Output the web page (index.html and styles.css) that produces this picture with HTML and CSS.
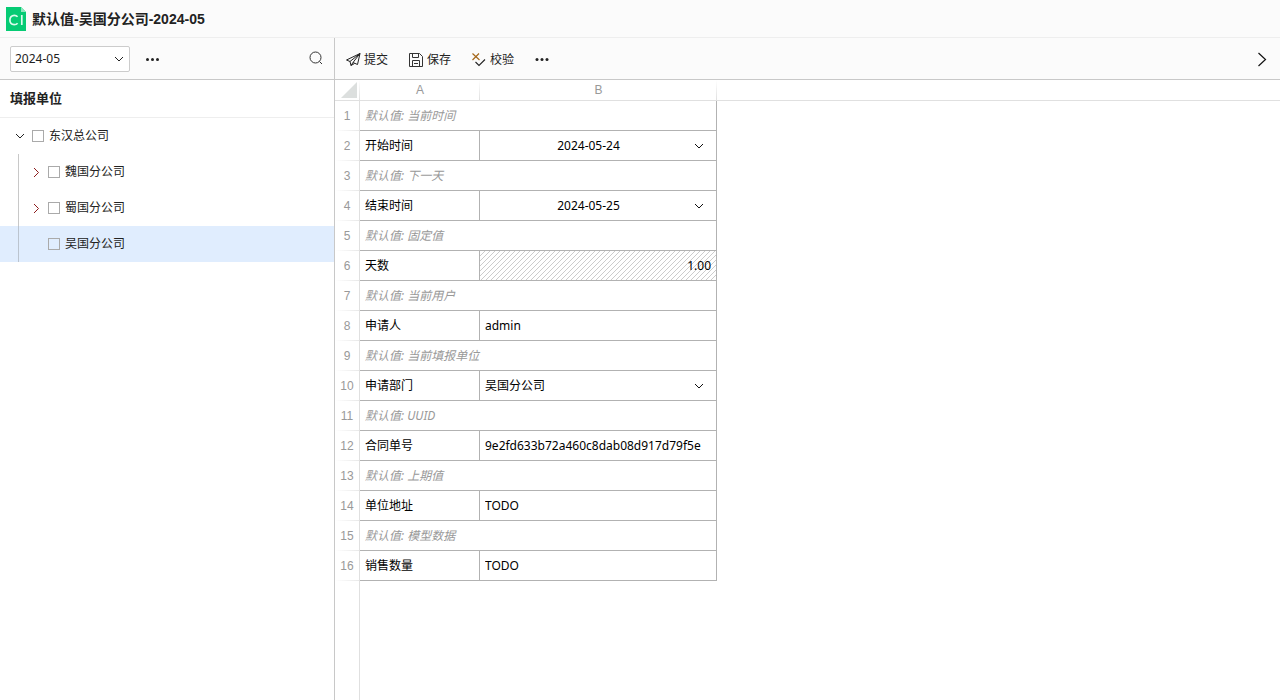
FILE: index.html
```html
<!DOCTYPE html>
<html lang="zh-CN">
<head>
<meta charset="utf-8">
<title>默认值-吴国分公司-2024-05</title>
<link rel="stylesheet" href="styles.css">
</head>
<body>
<header class="titlebar">
  <svg class="logo" viewBox="0 0 20 24" width="20" height="24" aria-hidden="true">
    <path d="M0 0H15L20 5V24H0Z" fill="#06cb74"/>
    <path d="M15 0L20 5H15Z" fill="#8fe8bf"/>
    <path d="M11.600 9.800C10.700 8.800 9.600 8.400 8.300 8.400C5.600 8.400 3.900 10.300 3.900 13.100C3.900 15.900 5.600 17.700 8.200 17.700C9.600 17.700 10.800 17.200 11.600 16.200M15.800 8V18" fill="none" stroke="#dcfbec" stroke-width="1.700"/>
  </svg>
  <h1 class="title">默认值-吴国分公司-2024-05</h1>
</header>
<main class="workspace">
  <aside class="sidebar">
    <div class="toolbar side-tools">
      <select class="period" aria-label="期间"><option>2024-05</option></select>
      <button class="icon-btn" aria-label="更多"><svg width="16" height="16" viewBox="0 0 16 16"><g fill="#222"><circle cx="2.500" cy="8.500" r="1.500"/><circle cx="7.500" cy="8.500" r="1.500"/><circle cx="12.500" cy="8.500" r="1.500"/></g></svg></button>
      <button class="icon-btn search" aria-label="搜索"><svg width="16" height="16" viewBox="0 0 16 16" fill="none" stroke="#333"><circle cx="7.500" cy="6.500" r="5.500"/><path d="M11.500 10.500L14 13"/></svg></button>
    </div>
    <h2 class="side-title">填报单位</h2>
    <ul class="tree">
      <li>
        <div class="node">
          <button class="twist" aria-label="收起"><svg width="12" height="12" viewBox="0 0 12 12"><path d="M2 4L6 8L10 4" fill="none" stroke="#222"/></svg></button>
          <label class="node-label"><input type="checkbox" class="tick">东汉总公司</label>
        </div>
        <ul class="branch">
          <li class="node">
            <button class="twist" aria-label="展开"><svg width="12" height="12" viewBox="0 0 12 12"><path d="M4 2L8.500 6.500L4 11" fill="none" stroke="#8c1c1c"/></svg></button>
            <label class="node-label"><input type="checkbox" class="tick">魏国分公司</label>
          </li>
          <li class="node">
            <button class="twist" aria-label="展开"><svg width="12" height="12" viewBox="0 0 12 12"><path d="M4 2L8.500 6.500L4 11" fill="none" stroke="#8c1c1c"/></svg></button>
            <label class="node-label"><input type="checkbox" class="tick">蜀国分公司</label>
          </li>
          <li class="node selected">
            <span class="twist"></span>
            <label class="node-label"><input type="checkbox" class="tick">吴国分公司</label>
          </li>
        </ul>
      </li>
    </ul>
  </aside>
  <section class="content">
    <div class="toolbar main-tools">
      <button class="tool"><svg width="16" height="16" viewBox="0 0 16 16" fill="none" stroke="#222" stroke-linejoin="round"><path d="M15 1.500L1.500 8L5 9.500L15 1.500L12.500 12.500L8 10.500L15 1.500M5 9.500L6 13.500L8 10.500M6 13.500L9.500 11.500"/></svg>提交</button>
      <button class="tool"><svg width="16" height="16" viewBox="0 0 16 16" fill="none" stroke="#333"><path d="M1.500 1.500H11.500L14.500 4.500V14.500H1.500ZM4.500 1.500V5.500H10.500V1.500M4.500 14.500V8.500H11.500V14.500M6 11.500H10"/></svg>保存</button>
      <button class="tool"><svg width="16" height="16" viewBox="0 0 16 16" fill="none"><path d="M1.500 1.500L8.500 8M8 1.500L1.500 8" stroke="#a5681c" stroke-width="1.200"/><path d="M4.500 10L8 13.500L14 7.500" stroke="#222" stroke-width="1.100"/></svg>校验</button>
      <button class="icon-btn" aria-label="更多"><svg width="16" height="16" viewBox="0 0 16 16"><g fill="#222"><circle cx="3" cy="8.500" r="1.500"/><circle cx="8" cy="8.500" r="1.500"/><circle cx="13" cy="8.500" r="1.500"/></g></svg></button>
      <button class="icon-btn next" aria-label="展开右侧"><svg width="16" height="16" viewBox="0 0 16 16"><path d="M4.500 2L11.500 8.500L4.500 15" fill="none" stroke="#111" stroke-width="1.200"/></svg></button>
    </div>
    <table class="sheet">
      <colgroup><col class="c-num"><col class="c-a"><col class="c-b"><col></colgroup>
      <thead>
        <tr><th class="corner"><svg width="16" height="16" viewBox="0 0 16 16"><path d="M16 0V16H0Z" fill="#dcdfde"/></svg></th><th>A</th><th>B</th><th class="rest"></th></tr>
      </thead>
      <tbody>
        <tr><th>1</th><td colspan="2" class="hint">默认值: 当前时间</td></tr>
        <tr><th>2</th><td>开始时间</td><td class="edit"><select class="field date" aria-label="开始时间"><option>2024-05-24</option></select></td></tr>
        <tr><th>3</th><td colspan="2" class="hint">默认值: 下一天</td></tr>
        <tr><th>4</th><td>结束时间</td><td class="edit"><select class="field date" aria-label="结束时间"><option>2024-05-25</option></select></td></tr>
        <tr><th>5</th><td colspan="2" class="hint">默认值: 固定值</td></tr>
        <tr><th>6</th><td>天数</td><td class="edit hatched"><input class="field number" aria-label="天数" value="1.00" readonly></td></tr>
        <tr><th>7</th><td colspan="2" class="hint">默认值: 当前用户</td></tr>
        <tr><th>8</th><td>申请人</td><td class="edit"><input class="field" aria-label="申请人" value="admin"></td></tr>
        <tr><th>9</th><td colspan="2" class="hint">默认值: 当前填报单位</td></tr>
        <tr><th>10</th><td>申请部门</td><td class="edit"><select class="field" aria-label="申请部门"><option>吴国分公司</option></select></td></tr>
        <tr><th>11</th><td colspan="2" class="hint">默认值: UUID</td></tr>
        <tr><th>12</th><td>合同单号</td><td class="edit"><input class="field" aria-label="合同单号" value="9e2fd633b72a460c8dab08d917d79f5e"></td></tr>
        <tr><th>13</th><td colspan="2" class="hint">默认值: 上期值</td></tr>
        <tr><th>14</th><td>单位地址</td><td class="edit"><input class="field" aria-label="单位地址" value="TODO"></td></tr>
        <tr><th>15</th><td colspan="2" class="hint">默认值: 模型数据</td></tr>
        <tr><th>16</th><td>销售数量</td><td class="edit"><input class="field" aria-label="销售数量" value="TODO"></td></tr>
      </tbody>
    </table>
    <div class="gutter"></div>
  </section>
</main>
</body>
</html>
```
FILE: styles.css
```css
* { box-sizing: border-box; }
body {
  margin: 0;
  min-height: 100vh;
  display: flex;
  flex-direction: column;
  background: #fff;
  color: #222;
  font: 12px/18px "Noto Sans", "Noto Sans CJK SC", sans-serif;
}
button, select, input { font: inherit; color: inherit; }
button { border: 0; padding: 0; background: none; }
svg { display: block; flex: none; }
ul { list-style: none; margin: 0; padding: 0; }

.titlebar {
  display: flex;
  align-items: center;
  gap: 6px;
  height: 38px;
  padding: 0 6px;
  background: #fbfbfb;
  border-bottom: 1px solid #eee;
}
.title { margin: 0; font: bold 14px/20px "Liberation Sans", "Noto Sans CJK SC", sans-serif; }

.workspace { flex: 1; display: flex; }
.sidebar { width: 335px; flex: none; border-right: 1px solid #c8c8c8; }
.content { flex: 1; min-width: 0; display: flex; flex-direction: column; }

.toolbar {
  display: flex;
  align-items: center;
  height: 42px;
  background: #fbfbfb;
  border-bottom: 1px solid #c8c8c8;
}
.side-tools { padding: 0 10px; gap: 15px; }
.period {
  width: 120px;
  height: 26px;
  padding: 0 4px;
  border: 1px solid #ccc;
  border-radius: 2px;
  appearance: none;
  background: #fff url("data:image/svg+xml,%3Csvg xmlns='http://www.w3.org/2000/svg' width='10' height='10'%3E%3Cpath d='M1 3L5 7L9 3' fill='none' stroke='%23222'/%3E%3C/svg%3E") no-repeat right 5px center;
}
.search { margin-left: auto; }
.main-tools { padding: 0 10px; gap: 20px; }
.tool { display: flex; align-items: center; gap: 3px; padding-top: 2px; }
.next { margin-left: auto; }

.side-title {
  margin: 0;
  padding: 9px 10px;
  font-size: 13px;
  line-height: 19px;
  border-bottom: 1px solid #eee;
}
.node { display: flex; align-items: center; gap: 6px; height: 36px; padding-left: 14px; }
.branch { background: linear-gradient(#c8c8c8, #c8c8c8) no-repeat 18px 0 / 1px 100%; }
.branch .node { padding-left: 30px; }
.selected { background: #e0edfe linear-gradient(#bbc4cf, #bbc4cf) no-repeat 18px 0 / 1px 100%; }
.twist { width: 12px; }
.node-label { display: flex; align-items: center; gap: 5px; }
.tick { appearance: none; width: 12px; height: 12px; margin: 0; border: 1px solid #aaa; background: transparent; }

.sheet { width: 100%; table-layout: fixed; border-collapse: separate; border-spacing: 0; }
.c-num { width: 25px; }
.c-a { width: 120px; }
.c-b { width: 237px; }
.sheet th {
  padding: 0;
  color: #999;
  font: 12px/18px "Liberation Sans", sans-serif;
  text-align: center;
}
.sheet thead th {
  height: 21px;
  border-bottom: 1px solid #e0e0e0;
  background: linear-gradient(#fff, #e0e0e0) no-repeat right / 1px 100%;
}
.sheet thead .rest { background: none; }
.sheet thead .corner { padding-left: 6px; }
.sheet tbody th {
  border-right: 1px solid #e0e0e0;
  background: linear-gradient(to right, #fff, #e8e8e8) no-repeat bottom / 100% 1px;
}
.sheet td {
  height: 30px;
  padding: 0 5px;
  color: #000;
  border-right: 1px solid #b2b2b2;
  border-bottom: 1px solid #b2b2b2;
}
.sheet .hint { color: #999; font-style: italic; }
.sheet .edit { padding: 0; }
.hatched { background: url("data:image/svg+xml,%3Csvg xmlns='http://www.w3.org/2000/svg' width='5' height='5' fill='%23ccc' shape-rendering='crispEdges'%3E%3Cpath d='M4 0h1v1h-1zM3 1h1v1h-1zM2 2h1v1h-1zM1 3h1v1h-1zM0 4h1v1h-1z'/%3E%3C/svg%3E"); }
.field {
  display: block;
  width: 100%;
  height: 29px;
  margin: 0;
  padding: 0 5px;
  border: 0;
  border-radius: 0;
  outline: 0;
  background: transparent;
}
select.field {
  appearance: none;
  background: url("data:image/svg+xml,%3Csvg xmlns='http://www.w3.org/2000/svg' width='10' height='10'%3E%3Cpath d='M1 3L5 7L9 3' fill='none' stroke='%23111'/%3E%3C/svg%3E") no-repeat right 12px center;
}
.date { padding-right: 24px; text-align: center; }
.number { text-align: right; }
.gutter { flex: 1; width: 25px; border-right: 1px solid #e0e0e0; }
```
